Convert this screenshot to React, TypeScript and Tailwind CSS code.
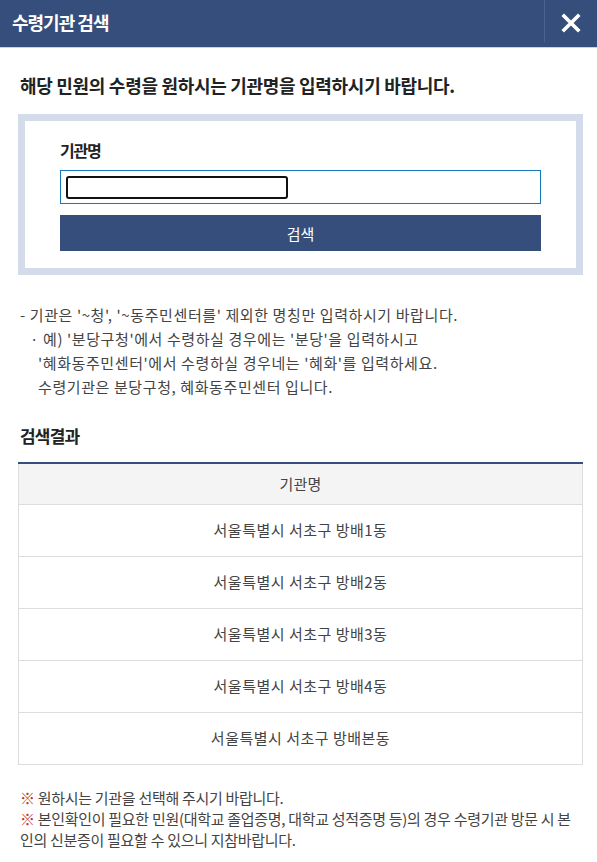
import React from 'react';

const rows = [
  '서울특별시 서초구 방배1동',
  '서울특별시 서초구 방배2동',
  '서울특별시 서초구 방배3동',
  '서울특별시 서초구 방배4동',
  '서울특별시 서초구 방배본동',
];

export default function App() {
  return (
    <div
      className="w-[597px] min-h-[862px] bg-white text-[#333]"
      style={{ fontFamily: '"Noto Sans CJK KR", "Noto Sans", sans-serif' }}
    >
      {/* header */}
      <div className="h-[48px] bg-[#354e7b] border-b border-[#cfd3da] flex items-stretch">
        <h1 className="flex-1 pl-[12px] flex items-center text-white text-[18px] font-bold tracking-[-1px] leading-none pb-[4px]">
          수령기관 검색
        </h1>
        <div className="w-[53px] border-l border-[#4b6290] mb-[5px] flex items-center justify-center">
          <svg width="20" height="20" viewBox="0 0 20 20" className="mt-[4px]">
            <path d="M3 3 L17 17 M17 3 L3 17" stroke="white" strokeWidth="3.6" strokeLinecap="square" />
          </svg>
        </div>
      </div>

      <div className="pl-[18px] pr-[14px]">
        <p className="pt-[24px] pl-[2px] text-[18px] font-bold text-[#222] tracking-[-0.3px] leading-[26px]">
          해당 민원의 수령을 원하시는 기관명을 입력하시기 바랍니다.
        </p>

        {/* search box */}
        <div className="mt-[16px] border-[7px] border-[#d4dcec] h-[161px] px-[35px] pt-[17px]">
          <label className="block text-[16px] font-bold text-[#222] leading-[24px] tracking-[-1.2px]">기관명</label>
          <div className="mt-[8px] h-[34px] border border-[#1479b8] flex items-center px-[5px]">
            <div className="w-[222px] h-[23px] border-[2px] border-[#111] rounded-[3px]" />
          </div>
          <button className="mt-[11px] w-full h-[36px] bg-[#354e7b] text-white text-[15px] leading-none">
            검색
          </button>
        </div>

        {/* notes */}
        <div className="mt-[28px] pl-[2px] text-[15px] text-[#444] leading-[24px] tracking-[0.6px]">
          <p>- 기관은 '~청', '~동주민센터를' 제외한 명칭만 입력하시기 바랍니다.</p>
          <div className="pl-[10px]">
            <p>· 예) '분당구청'에서 수령하실 경우에는 '분당'을 입력하시고</p>
            <p className="pl-[8px]">'혜화동주민센터'에서 수령하실 경우네는 '혜화'를 입력하세요.</p>
            <p className="pl-[8px]">수령기관은 분당구청, 혜화동주민센터 입니다.</p>
          </div>
        </div>

        <h2 className="mt-[24px] pl-[2px] text-[17px] font-bold text-[#222] leading-[26px] tracking-[-0.8px]">검색결과</h2>

        {/* results table */}
        <table className="mt-[13px] w-full border-collapse border-t-[2px] border-t-[#354e7b] text-[15px] text-[#444]">
          <thead>
            <tr>
              <th className="h-[41px] bg-[#f4f4f4] border border-[#dddddd] border-t-0 font-normal tracking-[0.2px]">기관명</th>
            </tr>
          </thead>
          <tbody>
            {rows.map((r) => (
              <tr key={r}>
                <td className="h-[52px] border border-[#dddddd] text-center tracking-[0.5px]">{r}</td>
              </tr>
            ))}
          </tbody>
        </table>

        {/* footer notes */}
        <div className="mt-[22px] pl-[2px] pr-[4px] text-[15px] text-[#444] leading-[21px] tracking-[-0.3px]">
          <p><span className="text-[#c0392b]">※</span> 원하시는 기관을 선택해 주시기 바랍니다.</p>
          <p><span className="text-[#c0392b]">※</span> 본인확인이 필요한 민원(대학교 졸업증명, 대학교 성적증명 등)의 경우 수령기관 방문 시 본인의 신분증이 필요할 수 있으니 지참바랍니다.</p>
        </div>
      </div>
    </div>
  );
}
